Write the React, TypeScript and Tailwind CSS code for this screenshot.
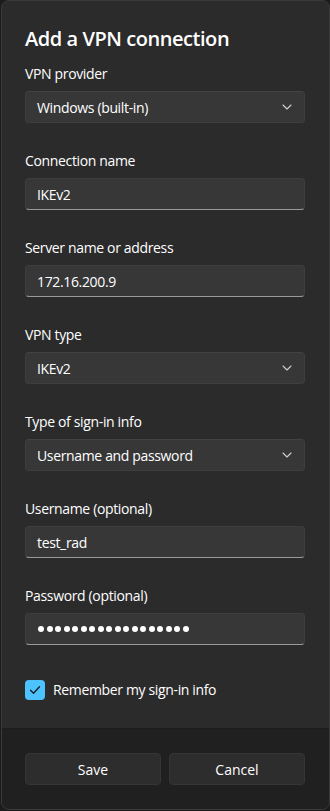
import React from "react";

const font = { fontFamily: '"Segoe UI", "Open Sans", "Noto Sans", sans-serif' };

function Chevron() {
  return (
    <svg width="10" height="6" viewBox="0 0 10 6" fill="none">
      <path d="M1 1l4 4 4-4" stroke="#cfcfcf" strokeWidth="1.1" strokeLinecap="round" strokeLinejoin="round" />
    </svg>
  );
}

function Label({ children }: { children: React.ReactNode }) {
  return <div className="h-5 text-[14px] leading-5 tracking-[-0.35px] text-white mb-[7px]">{children}</div>;
}

function Select({ value }: { value: string }) {
  return (
    <div className="h-8 rounded-[4px] bg-[#373737] border border-[#3e3e3e] border-t-[#424242] flex items-center justify-between pl-[11px] pr-[12px] text-[14px] tracking-[-0.35px] text-white">
      <span>{value}</span>
      <Chevron />
    </div>
  );
}

function TextBox({ children }: { children: React.ReactNode }) {
  return (
    <div className="h-8 rounded-[4px] bg-[#373737] border border-[#3e3e3e] border-b-[#9a9a9a] flex items-center pl-[11px] text-[14px] tracking-[-0.35px] text-white">
      {children}
    </div>
  );
}

export default function App() {
  const dots = Array.from({ length: 18 });
  return (
    <div className="w-[330px] h-[811px] bg-[#1c1c1c] pl-px" style={font}>
      <div className="h-[810px] rounded-[8px] border border-[#3a3a3a] bg-[#2b2b2b] overflow-hidden flex flex-col">
        <div className="flex-1 pl-[23px] pr-6 pt-[24px]">
          <div className="text-[20px] leading-7 font-semibold tracking-[-0.45px] text-white mb-[11px]">Add a VPN connection</div>
          <div className="flex flex-col gap-[28px]">
            <div>
              <Label>VPN provider</Label>
              <Select value="Windows (built-in)" />
            </div>
            <div>
              <Label>Connection name</Label>
              <TextBox>IKEv2</TextBox>
            </div>
            <div>
              <Label>Server name or address</Label>
              <TextBox>172.16.200.9</TextBox>
            </div>
            <div>
              <Label>VPN type</Label>
              <Select value="IKEv2" />
            </div>
            <div>
              <Label>Type of sign-in info</Label>
              <Select value="Username and password" />
            </div>
            <div>
              <Label>Username (optional)</Label>
              <TextBox>test_rad</TextBox>
            </div>
            <div>
              <Label>Password (optional)</Label>
              <TextBox>
                <div className="flex gap-[2.5px] pl-px">
                  {dots.map((_, i) => (
                    <div key={i} className="w-[6px] h-[6px] rounded-full bg-white" />
                  ))}
                </div>
              </TextBox>
            </div>
          </div>
          <div className="mt-[34px] flex items-center gap-2">
            <div className="w-5 h-5 rounded-[4px] bg-[#4cc2ff] flex items-center justify-center">
              <svg width="12" height="10" viewBox="0 0 12 10" fill="none">
                <path d="M1.5 5.2l3 3 6-6.4" stroke="#1b1b1b" strokeWidth="1.3" strokeLinecap="round" strokeLinejoin="round" />
              </svg>
            </div>
            <span className="text-[14px] tracking-[-0.35px] text-white">Remember my sign-in info</span>
          </div>
        </div>
        <div className="h-[81px] bg-[#202020] border-t border-[#1d1d1d] pl-[23px] pr-6 pt-6 flex gap-2">
          <div className="flex-1 h-8 rounded-[4px] bg-[#2d2d2d] border border-[#353535] flex items-center justify-center text-[14px] text-white">Save</div>
          <div className="flex-1 h-8 rounded-[4px] bg-[#2d2d2d] border border-[#353535] flex items-center justify-center text-[14px] text-white">Cancel</div>
        </div>
      </div>
    </div>
  );
}
